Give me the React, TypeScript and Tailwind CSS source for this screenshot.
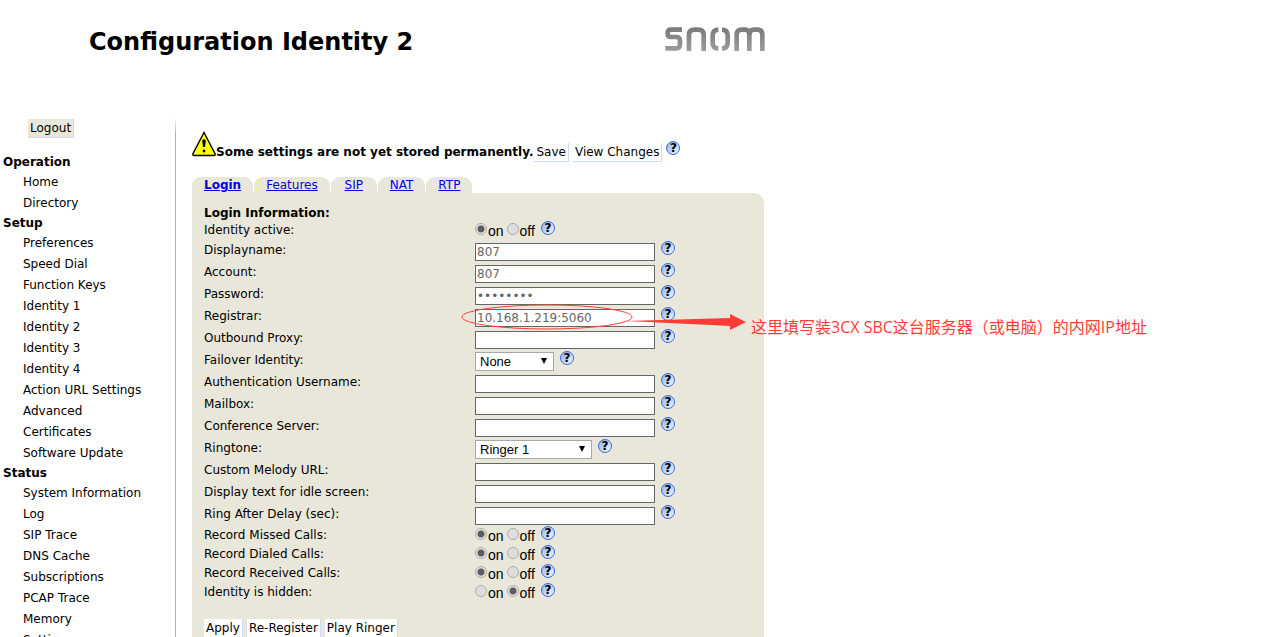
import { useId } from "react";

const menu = [
  { title: "Operation", items: ["Home", "Directory"] },
  {
    title: "Setup",
    items: [
      "Preferences",
      "Speed Dial",
      "Function Keys",
      "Identity 1",
      "Identity 2",
      "Identity 3",
      "Identity 4",
      "Action URL Settings",
      "Advanced",
      "Certificates",
      "Software Update",
    ],
  },
  {
    title: "Status",
    items: [
      "System Information",
      "Log",
      "SIP Trace",
      "DNS Cache",
      "Subscriptions",
      "PCAP Trace",
      "Memory",
      "Settings",
    ],
  },
];

const tabs = ["Login", "Features", "SIP", "NAT", "RTP"];

function SnomLogo() {
  return (
    <svg
      viewBox="0 0 300 72"
      className="mt-px h-6 w-[100px]"
      fill="none"
      stroke="url(#snom)"
      strokeWidth="14"
      role="img"
      aria-label="snom"
    >
      <defs>
        <linearGradient
          id="snom"
          gradientUnits="userSpaceOnUse"
          x1="0"
          y1="0"
          x2="0"
          y2="72"
        >
          <stop offset="0" stopColor="#7a7a7a" />
          <stop offset="1" stopColor="#9c9c9c" />
        </linearGradient>
      </defs>
      <path d="M51 8H18Q8 8 8 18V21Q8 30 17 30H35Q45 31 45 41V52Q45 64 34 64H1" />
      <path d="M72 72V24Q72 8 88 8H100Q116 8 116 24V72" />
      <path d="M160 8Q143 9 143 26V48Q143 63 160 65" />
      <path d="M171 8Q188 9 188 26V48Q188 63 171 65" />
      <path d="M215 72V24Q215 8 230 8H240Q253 8 253 24V72" />
      <path d="M253 24Q253 8 267 8H277Q292 8 292 24V72" />
    </svg>
  );
}

function WarningIcon() {
  return (
    <svg viewBox="0 0 24 26" className="h-[26px] w-6" aria-hidden="true">
      <path
        d="M12 1.5 L23.2 23 Q23.4 24.5 22 24.5 H2 Q0.6 24.5 0.8 23 Z"
        fill="#ffff00"
        stroke="#000"
        strokeWidth="1.4"
      />
      <path d="M10.2 9.5Q12 7 13.8 9.5L13 16H11Z" fill="#000" />
      <circle cx="12" cy="20" r="1.4" fill="#000" />
    </svg>
  );
}

function Help() {
  return (
    <button
      type="button"
      aria-label="Help"
      className="flex size-3.5 shrink-0 items-center justify-center rounded-full border border-[#3f66d4] bg-linear-to-br from-[#8db4ee] to-[#f2f6ff] text-[12px] leading-3 font-bold text-black"
    >
      ?
    </button>
  );
}

function ActionButton({ children, tone = "bg-white" }: { children: string; tone?: string }) {
  return (
    <button
      type="button"
      className={`${tone} border-r border-b border-[#d0daf8] px-0.5 leading-[18px] whitespace-nowrap`}
    >
      {children}
    </button>
  );
}

function TextRow({
  label,
  value = "",
  type = "text",
  children,
}: {
  label: string;
  value?: string;
  type?: string;
  children?: React.ReactNode;
}) {
  const id = useId();
  return (
    <div className="relative flex h-[22px] items-start pt-px">
      <label htmlFor={id} className="w-[271px] shrink-0 leading-[19px]">
        {label}
      </label>
      <input
        id={id}
        type={type}
        defaultValue={value}
        className="mt-0.5 mr-1.5 h-[18px] w-[180px] border border-[#666] bg-white px-px text-[12px] text-[#666]"
      />
      <Help />
      {children}
    </div>
  );
}

function SelectRow({ label, value, width }: { label: string; value: string; width: string }) {
  const id = useId();
  return (
    <div className="flex h-[22px] items-start pt-px">
      <label htmlFor={id} className="w-[271px] shrink-0 leading-[19px]">
        {label}
      </label>
      <div className={`relative mt-px mr-1.5 ${width}`}>
        <select
          id={id}
          className="block h-[19px] w-full appearance-none border border-[#a9a9a9] bg-white pl-1 font-['Liberation_Sans',Arial,sans-serif] text-[13px] leading-[17px] text-black"
        >
          <option>{value}</option>
        </select>
        <svg
          viewBox="0 0 6 6"
          className="pointer-events-none absolute top-1.5 right-[7px] size-1.5"
          aria-hidden="true"
        >
          <path d="M0 0H6L3 6Z" />
        </svg>
      </div>
      <Help />
    </div>
  );
}

function RadioRow({ label, on = true }: { label: string; on?: boolean }) {
  const name = useId();
  const radio =
    "mt-0.5 mr-px size-3 appearance-none rounded-full border border-[#adadad] bg-[#dedede] checked:bg-[radial-gradient(circle,#5c5c5c_3px,#e2e2e2_4px)]";
  return (
    <fieldset className="flex h-[19px] items-start">
      <legend className="float-left w-[271px] shrink-0 leading-[19px]">{label}</legend>
      <label className="mr-[3px] flex font-['Liberation_Sans',Arial,sans-serif] text-[14px]">
        <input type="radio" name={name} defaultChecked={on} className={radio} />
        <span className="mt-0.5 leading-[17px]">on</span>
      </label>
      <label className="mr-1.5 flex font-['Liberation_Sans',Arial,sans-serif] text-[14px]">
        <input type="radio" name={name} defaultChecked={!on} className={radio} />
        <span className="mt-0.5 leading-[17px]">off</span>
      </label>
      <Help />
    </fieldset>
  );
}

// Red marker drawn over the registrar field
function RegistrarNote() {
  return (
    <div className="pointer-events-none absolute -top-[3px] left-[257px] flex items-start text-[#ff3b36]">
      <svg viewBox="0 0 290 30" className="h-[30px] w-[290px] shrink-0" aria-hidden="true">
        <ellipse cx="86" cy="14" rx="85" ry="12" fill="none" stroke="currentColor" />
        <path d="M165 18L269 15V11L285 19L269 27V23L250 22Z" fill="currentColor" />
      </svg>
      <p className="mt-3 font-['Open_Sans','Noto_Sans_CJK_SC',sans-serif] text-[16px] leading-6 whitespace-nowrap">
        这里填写装3CX SBC这台服务器（或电脑）的内网IP地址
      </p>
    </div>
  );
}

export default function App() {
  return (
    <div className="flex h-screen flex-col overflow-hidden bg-white font-['DejaVu_Sans',Verdana,sans-serif] text-[12px] text-black">
      <header className="flex h-[117px] shrink-0 items-start pt-[26px] pl-[89px]">
        <h1 className="w-[576px] shrink-0 text-[24px] leading-8 font-bold">
          Configuration Identity 2
        </h1>
        <SnomLogo />
      </header>
      <div className="flex flex-1">
        <aside className="w-[175px] shrink-0 pt-0.5">
          <div className="mb-[15px] pl-7">
            <ActionButton tone="bg-[#e9e7d9]">Logout</ActionButton>
          </div>
          <nav className="pl-[3px]">
            {menu.map((group) => (
              <section key={group.title}>
                <h2 className="leading-[19px] font-bold">{group.title}</h2>
                <ul className="pl-5">
                  {group.items.map((item) => (
                    <li key={item} className="leading-[21px]">
                      <a href="#">{item}</a>
                    </li>
                  ))}
                </ul>
              </section>
            ))}
          </nav>
        </aside>
        <div className="w-px shrink-0 bg-linear-to-b from-white to-[#b5b3a5] to-[16px]" />
        <main className="w-[588px] pt-3.5 pl-4">
          <div className="flex h-[30px] items-start">
            <WarningIcon />
            <strong className="mt-3 mr-px leading-[19px] whitespace-nowrap">
              Some settings are not yet stored permanently.
            </strong>
            <div className="mt-3 mr-1 flex gap-1">
              <ActionButton>Save</ActionButton>
              <ActionButton>View Changes</ActionButton>
            </div>
            <div className="mt-2.5">
              <Help />
            </div>
          </div>
          <nav className="mt-4 flex gap-px">
            {tabs.map((tab, i) => (
              <a
                key={tab}
                href="#"
                className={`min-w-[46px] rounded-t-[9px] bg-[#e9e7d9] px-3 text-center leading-4 text-[#0000ee] underline ${i === 0 ? "font-bold" : ""}`}
              >
                {tab}
              </a>
            ))}
          </nav>
          <form className="rounded-tr-[10px] bg-[#e9e7d9] px-3 pt-3 pb-5">
            <h2 className="leading-4 font-bold">Login Information:</h2>
            <RadioRow label="Identity active:" />
            <TextRow label="Displayname:" value="807" />
            <TextRow label="Account:" value="807" />
            <TextRow label="Password:" value="password" type="password" />
            <TextRow label="Registrar:" value="10.168.1.219:5060">
              <RegistrarNote />
            </TextRow>
            <TextRow label="Outbound Proxy:" />
            <SelectRow label="Failover Identity:" value="None" width="w-[79px]" />
            <TextRow label="Authentication Username:" />
            <TextRow label="Mailbox:" />
            <TextRow label="Conference Server:" />
            <SelectRow label="Ringtone:" value="Ringer 1" width="w-[117px]" />
            <TextRow label="Custom Melody URL:" />
            <TextRow label="Display text for idle screen:" />
            <TextRow label="Ring After Delay (sec):" />
            <RadioRow label="Record Missed Calls:" />
            <RadioRow label="Record Dialed Calls:" />
            <RadioRow label="Record Received Calls:" />
            <RadioRow label="Identity is hidden:" on={false} />
            <div className="mt-[17px] flex gap-1">
              <ActionButton>Apply</ActionButton>
              <ActionButton>Re-Register</ActionButton>
              <ActionButton>Play Ringer</ActionButton>
            </div>
          </form>
        </main>
      </div>
    </div>
  );
}
